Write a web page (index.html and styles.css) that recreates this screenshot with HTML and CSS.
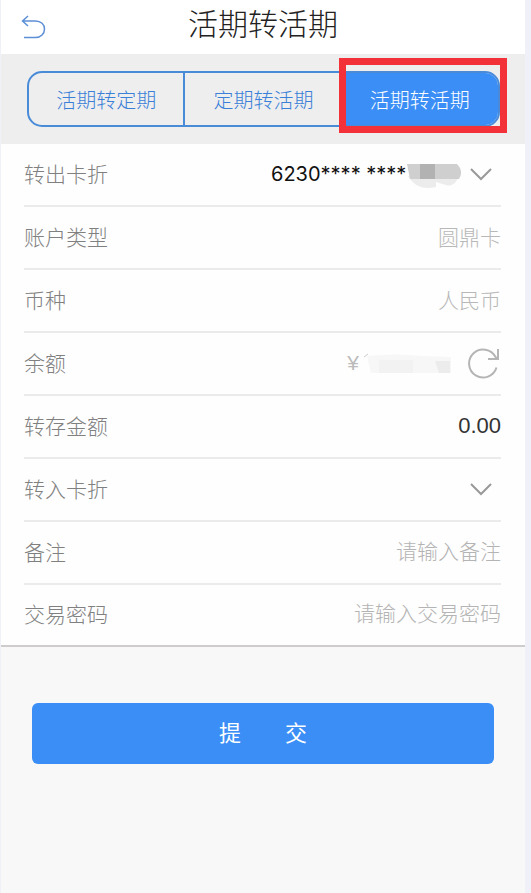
FILE: index.html
```html
<!DOCTYPE html>
<html lang="zh-CN">
<head>
<meta charset="utf-8">
<meta name="viewport" content="width=device-width, initial-scale=1">
<title>活期转活期</title>
<link rel="stylesheet" href="styles.css">
</head>
<body>
<div class="page">
  <header class="header">
    <button class="back" type="button" aria-label="返回">
      <svg width="26" height="26" viewBox="0 0 26 26"><path d="M7 1L1.500 6L7 11M1.500 6H14.500C20 6 23.500 9.500 23.500 14S20 22.500 14.500 22.500H3"/></svg>
    </button>
    <h1 class="title">活期转活期</h1>
  </header>
  <nav class="tabs">
    <div class="segments">
      <button class="segment" type="button">活期转定期</button>
      <button class="segment" type="button">定期转活期</button>
      <button class="segment active" type="button">活期转活期</button>
    </div>
  </nav>
  <form>
    <div class="rows">
      <div class="row">
        <label for="from">转出卡折</label>
        <div class="picker">
          <select class="account" id="from"><option>6230**** ****</option></select>
          <svg class="mask" width="54" height="28" viewBox="0 0 54 28"><path class="mask-pale" d="M1 16H52C49 23 45 27 39 25L29 22V27C16 30 7 26 1 16Z"/><path class="mask-mid" d="M0 4H50Q57 11 52 19H3Z"/><path class="mask-dark" d="M13 4H28V19H13Z"/></svg>
          <svg class="chevron" width="24" height="14" viewBox="0 0 24 14"><path d="M2 2L12 12L22 2"/></svg>
        </div>
      </div>
      <div class="row">
        <label for="type">账户类型</label>
        <input class="muted" id="type" value="圆鼎卡" readonly>
      </div>
      <div class="row">
        <label for="currency">币种</label>
        <input class="muted" id="currency" value="人民币" readonly>
      </div>
      <div class="row">
        <span class="name">余额</span>
        <div class="balance">
          <span class="yen">¥</span>
          <svg class="mask" width="92" height="24" viewBox="0 0 92 24"><path class="tick" d="M1 6L5 3"/><path class="blur-a" d="M4 5Q30 2 60 5L88 6V22H8Z"/><path class="blur-b" d="M16 9H50V22H16Z"/><path class="blur-c" d="M72 10H87V22H76Z"/></svg>
          <button class="refresh" type="button" aria-label="刷新余额">
            <svg width="34" height="34" viewBox="0 0 34 34"><path d="M29.500 21.500A14 14 0 1 1 28.500 11L30.500 13M31 3V13H21"/></svg>
          </button>
        </div>
      </div>
      <div class="row">
        <label for="amount">转存金额</label>
        <input class="amount" id="amount" value="0.00">
      </div>
      <div class="row">
        <label for="to">转入卡折</label>
        <div class="picker">
          <select class="account" id="to"><option></option></select>
          <svg class="chevron" width="24" height="14" viewBox="0 0 24 14"><path d="M2 2L12 12L22 2"/></svg>
        </div>
      </div>
      <div class="row">
        <label for="note">备注</label>
        <input id="note" placeholder="请输入备注">
      </div>
      <div class="row">
        <label for="password">交易密码</label>
        <input id="password" type="password" placeholder="请输入交易密码">
      </div>
    </div>
    <div class="actions">
      <button class="submit" type="submit">提　　交</button>
    </div>
  </form>
</div>
</body>
</html>
```
FILE: styles.css
```css
*,
*::after {
  box-sizing: border-box;
}

body {
  margin: 0;
  background: #f0f0f8;
  color: #808080;
  font-family: "Liberation Sans", "Noto Sans CJK SC", sans-serif;
  font-size: 21px;
  font-weight: 300;
}

button,
input,
select {
  margin: 0;
  padding: 0;
  border: 0;
  background: none;
  color: inherit;
  font: inherit;
}

svg {
  display: block;
  flex: none;
  fill: none;
}

.page {
  min-height: 100vh;
  margin: 0 6px 0 1px;
  background: #f8f8f9;
}

.header {
  display: grid;
  grid-template-columns: 48px 1fr 48px;
  align-items: center;
  height: 54px;
  padding-bottom: 4px;
  background: #fff;
}

.back {
  padding: 6px 0 0 20px;
}

.back svg {
  stroke: #5c8fd6;
  stroke-width: 1.5;
}

.title {
  margin: 0;
  color: #222;
  font-size: 30px;
  font-weight: 300;
  line-height: 50px;
  text-align: center;
}

.tabs {
  padding: 17px 25px 17px 26px;
  background: #eee;
}

.segments {
  position: relative;
  display: grid;
  grid-template-columns: repeat(3, 1fr);
  height: 56px;
  border: 2px solid #4a8bd8;
  border-radius: 15px;
}

.segments::after {
  content: "";
  position: absolute;
  inset: -15px -9px -8px auto;
  width: 168px;
  border: 7px solid #f23238;
  pointer-events: none;
}

.segment {
  color: #3a80d8;
  font-size: 20px;
}

.segment:first-child {
  border-right: 2px solid #4a8bd8;
}

.segment.active {
  border-radius: 0 13px 13px 0;
  background: #3a8ef6;
  color: #fff;
}

.rows {
  padding: 0 24px 0 23px;
  border-bottom: 2px solid #cfccce;
  background: #fefefe;
}

.row {
  display: flex;
  align-items: center;
  justify-content: space-between;
  height: 63px;
  padding-bottom: 2px;
  border-bottom: 2px solid #ebebeb;
}

.row:last-child {
  height: 60px;
  border-bottom: 0;
}

.row label,
.name,
.muted {
  flex: none;
  padding-bottom: 2px;
}

.row input {
  flex: 1;
  min-width: 0;
  text-align: right;
  outline: 0;
}

.row input::placeholder {
  color: #b4b4b4;
  opacity: 1;
}

.row .muted {
  color: #b8b8b8;
}

.row .amount {
  color: #333;
  font-size: 22px;
}

.picker,
.balance {
  display: flex;
  align-items: center;
}

.account {
  appearance: none;
  color: #111;
  font-family: Inter, "Liberation Sans", sans-serif;
  font-size: 20px;
  font-weight: 400;
}

.chevron {
  margin: 0 8px;
  stroke: #999;
  stroke-width: 2;
}

.mask-pale {
  fill: #ececec;
}

.mask-mid {
  fill: #cfcfcf;
}

.mask-dark {
  fill: #b2b2b2;
}

.yen {
  padding-right: 4px;
  color: #bbb;
}

.tick {
  stroke: #ccc;
  stroke-width: 1;
}

.blur-a {
  fill: #f8f7f8;
}

.blur-b {
  fill: #f3f2f3;
}

.blur-c {
  fill: #ececec;
}

.refresh {
  padding-left: 12px;
}

.refresh svg {
  stroke: #b5b5b5;
  stroke-width: 2;
}

.actions {
  padding: 56px 31px;
}

.submit {
  display: block;
  width: 100%;
  height: 61px;
  padding-bottom: 6px;
  border-radius: 6px;
  background: #3a8ef6;
  color: #fff;
  font-size: 22px;
  font-weight: 400;
}
```
